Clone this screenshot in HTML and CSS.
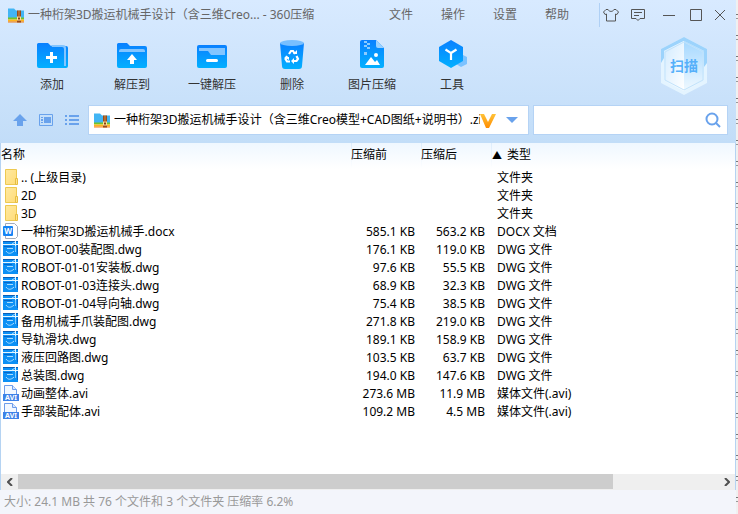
FILE: index.html
```html
<!DOCTYPE html>
<html lang="zh-CN">
<head>
  <meta charset="UTF-8" />
  <meta name="viewport" content="width=device-width, initial-scale=1.0"/>
  <title>360压缩</title>
  <link rel="stylesheet" href="styles.css">
</head>
<body>

<!-- Shared icons -->
<svg class="defs" aria-hidden="true">
  <defs>
    <linearGradient id="blue" x1="0" y1="0" x2="0" y2="1">
      <stop offset="0" stop-color="#0a80ff"/><stop offset="1" stop-color="#02b0ff"/>
    </linearGradient>
    <linearGradient id="gold" x1="0" y1="0" x2="1" y2="1">
      <stop offset="0" stop-color="#ffe9a0"/><stop offset="1" stop-color="#ffdc78"/>
    </linearGradient>
    <linearGradient id="orange" x1="0" y1="0" x2="0" y2="1">
      <stop offset="0" stop-color="#ffc338"/><stop offset="1" stop-color="#ff8c00"/>
    </linearGradient>
    <linearGradient id="shieldLeft" x1="0" y1="0" x2="1" y2="1">
      <stop offset="0" stop-color="#d2ebff"/><stop offset="1" stop-color="#ffffff"/>
    </linearGradient>
    <linearGradient id="shieldRight" x1="0" y1="0" x2="0" y2="1">
      <stop offset="0" stop-color="#a5d8ff"/><stop offset="1" stop-color="#f0f9ff"/>
    </linearGradient>
    <symbol id="archive" viewBox="0 0 16 15">
      <path d="M0 1h6l2 2h8v8H0z" fill="#42b5f4"/>
      <path d="M0 10h16v2H0z" fill="#72c52b"/>
      <path d="M0 12h16v2H0z" fill="#ffb51b"/>
      <path d="M0 14h16v1H0z" fill="#f07b16"/>
      <path d="M9 3h4v12H9z" fill="#9a4b18"/>
      <path d="M11 3v6" stroke="#ffd47c" stroke-dasharray="1 1"/>
      <path d="M9 9h4v4H9z" fill="#ffe39a"/>
      <path d="M10 10h2v2h-2z" fill="#8a3e10"/>
    </symbol>
    <symbol id="folder" viewBox="0 0 16 16">
      <path d="M2.500.5h11v15h-11z" fill="url(#gold)" stroke="#edc951"/>
      <path d="M12.500 9.500h2v6h-2z" fill="#ffe38b" stroke="#e6bd42"/>
    </symbol>
    <symbol id="docx" viewBox="0 0 16 16">
      <path d="M2.500.5h9l3 3v10l-2 2h-10z" fill="#fff" stroke="#a3abba"/>
      <rect y="3" width="10" height="10" rx="1" fill="#1684f5"/>
      <text x="5" y="11" font-size="8" font-weight="bold" text-anchor="middle" fill="#fff">W</text>
    </symbol>
    <symbol id="dwg" viewBox="0 0 16 16">
      <path d="M0 0h15v15H0z" fill="#0c90f5"/>
      <path d="M0 .5h15" stroke="#0a5fb8"/>
      <path d="M0 3.500h15M12.500 0v5" stroke="#e4f6ff"/>
      <path d="M12.500 5v6" stroke="#7fcaff"/>
      <path d="M4 7.500h6M3 10c2 3 5 3 8 0M9 3l3-2" fill="none" stroke="#a9dcff"/>
      <path d="M1 5.500h8M14.500 4v9" stroke="#0666c9"/>
    </symbol>
    <symbol id="avi" viewBox="0 0 16 16">
      <path d="M1.500 10V.5h8l4 4V10" fill="#f3f8ff" stroke="#6c9deb"/>
      <path d="M9.500.5v4h4" fill="#d9e8ff" stroke="#6c9deb"/>
      <path d="M0 9h16v7H0z" fill="#3d82e8"/>
      <text x="8" y="15" font-size="7" font-weight="bold" text-anchor="middle" fill="#fff">AVI</text>
    </symbol>
  </defs>
</svg>

<main class="window">
  <header class="titlebar">
    <svg class="icon"><use href="#archive"/></svg>
    <h1>一种桁架3D搬运机械手设计（含三维Creo... - 360压缩</h1>
    <nav class="menu">
      <button>文件</button>
      <button>操作</button>
      <button>设置</button>
      <button>帮助</button>
    </nav>
    <div class="window-buttons">
      <button aria-label="皮肤"><svg width="16" height="14" viewBox="0 0 16 14"><path d="M5 1.500H3L.5 4 2 6.500l1.500-.5v7h9V6l1.500.5L15.500 4 13 1.500h-2C10 4 6 4 5 1.500z"/></svg></button>
      <button aria-label="反馈"><svg width="14" height="12" viewBox="0 0 14 12"><path d="M.5.5h13v9H9l-2 2-2-2H.5zM3 3.500h8M3 6.500h5"/></svg></button>
      <button aria-label="最小化"><svg width="12" height="12" viewBox="0 0 12 12"><path d="M0 6.500h12"/></svg></button>
      <button aria-label="最大化"><svg width="12" height="12" viewBox="0 0 12 12"><path d="M.5.5h11v11H.5z"/></svg></button>
      <button aria-label="关闭"><svg width="12" height="12" viewBox="0 0 12 12"><path d="M1 1l10 10M11 1L1 11"/></svg></button>
    </div>
  </header>

  <section class="toolbar">
    <button>
      <svg viewBox="0 0 32 32"><path d="M1 4.500Q1 3 2.500 3H12l3 3h15q2 0 2 2v18q0 2-2 2H3q-2 0-2-2z" fill="url(#blue)"/><path d="M15 5h12q3 0 3 3v18h-2V9q0-2-2-2H16z" fill="#83c5ff"/><path d="M15.500 12v11M10 17.500h11" stroke="#fff" stroke-width="3"/></svg>
      添加
    </button>
    <button>
      <svg viewBox="0 0 32 32"><path d="M1 4.500Q1 3 2.500 3H11l3 3h15q2 0 2 2v18q0 2-2 2H3q-2 0-2-2z" fill="url(#blue)"/><path d="M3 12v-1q0-2 2-2h22q2 0 2 2v1z" fill="#83c5ff"/><path d="M16 14l5 6h-3v4h-4v-4h-3z" fill="#fff"/></svg>
      解压到
    </button>
    <button>
      <svg viewBox="0 0 32 32"><rect x="1" y="5" width="30" height="23" rx="2" fill="url(#blue)"/><path d="M3 8h26v7H15l-3-4H3z" fill="#83c5ff"/><path d="M11.500 20.500h9" stroke="#fff" stroke-width="3" stroke-linecap="round"/></svg>
      一键解压
    </button>
    <button>
      <svg viewBox="0 0 32 32"><path d="M4 3l2 23q0 3 3 3h14q3 0 3-3l2-23z" fill="url(#blue)"/><ellipse cx="16" cy="3" rx="12" ry="3" fill="#78bfff"/><g fill="none" stroke="#fff" stroke-width="2.200"><path d="M13 14l2-3h2l2 3M20.500 16l1.500 3-1.500 2H17M14 21.500h-3l-1.500-2.500 1.500-3"/></g><path d="M17 14h4v-4zM18 18v6l-3-3zM8 17h5v3z" fill="#fff"/></svg>
      删除
    </button>
    <button>
      <svg viewBox="0 0 32 32"><path d="M4 2q0-2 2-2h14l8 8v18q0 2-2 2H6q-2 0-2-2z" fill="url(#blue)"/><path d="M20 0l8 8h-6q-2 0-2-2z" fill="#9bd1ff"/><path d="M8 1h3v2H8zM11 3h3v2h-3zM8 5h3v2H8zM11 7h3v2h-3zM8 12h3v3H8z" fill="#8ccbff"/><circle cx="20" cy="15" r="2" fill="#fff"/><path d="M9 25l6-8 4 5 2-2 3 5z" fill="#fff"/></svg>
      图片压缩
    </button>
    <button>
      <svg viewBox="0 0 32 32"><path d="M25 14l6 3v7l-6 3-5-3v-7z" fill="#7bc2ff"/><path d="M15 0l12 7v14l-12 7-12-7V7z" fill="url(#blue)"/><path d="M9.500 9.500L15 13v7M15 13l5.500-3.500" fill="none" stroke="#fff" stroke-width="2.200"/></svg>
      工具
    </button>
    <button class="scan">
      <svg viewBox="0 0 48 60"><path d="M24 1l23 12v34L24 59 1 47V13z" fill="#e4f4ff"/><path d="M24 1l23 12v14l-3 4V15L24 5 4 15v7L1 27V13z" fill="#9cd3fc"/><path d="M24 5v50L4 45V15z" fill="url(#shieldLeft)"/><path d="M24 5l20 10v30L24 55z" fill="url(#shieldRight)"/><path d="M24 6l19 10v28L24 54 5 44V16z" fill="none" stroke="#c2e3fb"/></svg>
      <span>扫描</span>
    </button>
  </section>

  <section class="addressbar">
    <button aria-label="向上"><svg width="14" height="12" viewBox="0 0 14 12"><path d="M7 0l7 7h-4v5H4V7H0z" fill="#69a2ec"/></svg></button>
    <button aria-label="预览"><svg width="14" height="12" viewBox="0 0 14 12"><path d="M.5.5h13v11H.5z" fill="none" stroke="#69a2ec"/><path d="M5 3h7v6H5zM2 3h2v1H2zM2 5h2v2H2zM2 8h2v1H2z" fill="#69a2ec"/></svg></button>
    <button aria-label="列表"><svg width="14" height="12" viewBox="0 0 14 12"><path d="M0 1h2v2H0zM4 1h10v2H4zM0 5h2v2H0zM4 5h10v2H4zM0 9h2v2H0zM4 9h10v2H4z" fill="#69a2ec"/></svg></button>
    <div class="field path">
      <svg class="icon"><use href="#archive"/></svg>
      <input type="text" aria-label="路径" value="一种桁架3D搬运机械手设计（含三维Creo模型+CAD图纸+说明书）.zip">
      <svg width="16" height="15" viewBox="0 0 16 15"><path d="M0 1h4l4 8 4-8h4L9 15H6z" fill="url(#orange)"/></svg>
      <button aria-label="历史路径"><svg width="12" height="6" viewBox="0 0 12 6"><path d="M0 0h12L6 6z" fill="#69a2ec"/></svg></button>
    </div>
    <div class="field search">
      <input type="text" aria-label="搜索">
      <button aria-label="搜索"><svg width="16" height="16" viewBox="0 0 16 16"><circle cx="7" cy="7" r="5.500" fill="none" stroke="#69a2ec" stroke-width="2"/><path d="M11 11l4 4" stroke="#69a2ec" stroke-width="2"/></svg></button>
    </div>
  </section>

  <section class="files">
    <table>
      <colgroup><col class="col-name"><col class="col-size"><col class="col-size"><col></colgroup>
      <thead>
        <tr><th>名称</th><th>压缩前</th><th>压缩后</th><th><span class="sort">▲</span>类型</th></tr>
      </thead>
      <tbody>
        <tr><td><svg class="icon"><use href="#folder"/></svg>.. (上级目录)</td><td></td><td></td><td>文件夹</td></tr>
        <tr><td><svg class="icon"><use href="#folder"/></svg>2D</td><td></td><td></td><td>文件夹</td></tr>
        <tr><td><svg class="icon"><use href="#folder"/></svg>3D</td><td></td><td></td><td>文件夹</td></tr>
        <tr><td><svg class="icon"><use href="#docx"/></svg>一种桁架3D搬运机械手.docx</td><td>585.1 KB</td><td>563.2 KB</td><td>DOCX 文档</td></tr>
        <tr><td><svg class="icon"><use href="#dwg"/></svg>ROBOT-00装配图.dwg</td><td>176.1 KB</td><td>119.0 KB</td><td>DWG 文件</td></tr>
        <tr><td><svg class="icon"><use href="#dwg"/></svg>ROBOT-01-01安装板.dwg</td><td>97.6 KB</td><td>55.5 KB</td><td>DWG 文件</td></tr>
        <tr><td><svg class="icon"><use href="#dwg"/></svg>ROBOT-01-03连接头.dwg</td><td>68.9 KB</td><td>32.3 KB</td><td>DWG 文件</td></tr>
        <tr><td><svg class="icon"><use href="#dwg"/></svg>ROBOT-01-04导向轴.dwg</td><td>75.4 KB</td><td>38.5 KB</td><td>DWG 文件</td></tr>
        <tr><td><svg class="icon"><use href="#dwg"/></svg>备用机械手爪装配图.dwg</td><td>271.8 KB</td><td>219.0 KB</td><td>DWG 文件</td></tr>
        <tr><td><svg class="icon"><use href="#dwg"/></svg>导轨滑块.dwg</td><td>189.1 KB</td><td>158.9 KB</td><td>DWG 文件</td></tr>
        <tr><td><svg class="icon"><use href="#dwg"/></svg>液压回路图.dwg</td><td>103.5 KB</td><td>63.7 KB</td><td>DWG 文件</td></tr>
        <tr><td><svg class="icon"><use href="#dwg"/></svg>总装图.dwg</td><td>194.0 KB</td><td>147.6 KB</td><td>DWG 文件</td></tr>
        <tr><td><svg class="icon"><use href="#avi"/></svg>动画整体.avi</td><td>273.6 MB</td><td>11.9 MB</td><td>媒体文件(.avi)</td></tr>
        <tr><td><svg class="icon"><use href="#avi"/></svg>手部装配体.avi</td><td>109.2 MB</td><td>4.5 MB</td><td>媒体文件(.avi)</td></tr>
      </tbody>
    </table>
  </section>

  <div class="scrollbar">
    <button aria-label="向左滚动"><svg width="6" height="8" viewBox="0 0 6 8"><path d="M5 0L1 4l4 4"/></svg></button>
    <div class="track"><div class="thumb"></div></div>
    <button aria-label="向右滚动"><svg width="6" height="8" viewBox="0 0 6 8"><path d="M1 0l4 4-4 4"/></svg></button>
  </div>

  <footer class="status">大小: 24.1 MB 共 76 个文件和 3 个文件夹 压缩率 6.2%</footer>
</main>

<!-- Sliver of the window behind -->
<div class="behind"></div>

</body>
</html>
```

FILE: styles.css
```css
* {
  box-sizing: border-box;
}

body {
  margin: 0;
  display: flex;
  min-height: 100vh;
  font: 12px/18px "Noto Sans", "Noto Sans CJK SC", sans-serif;
  color: #000;
}

button, input {
  border: 0;
  padding: 0;
  background: none;
  font: inherit;
  color: inherit;
}

svg {
  flex: none;
}

.defs {
  position: absolute;
  width: 0;
  height: 0;
}

.icon {
  width: 16px;
  height: 16px;
}

.window {
  flex: 1;
  min-width: 0;
  display: flex;
  flex-direction: column;
  background: linear-gradient(#d8eaff, #c2ddf8 143px);
}

.behind {
  width: 2px;
  background: repeating-linear-gradient(#f0f0f0 0 14px, #777 14px 15px, #f0f0f0 15px 18px, #999 18px 19px, #f0f0f0 19px 21px);
}

/* Title bar */
.titlebar {
  display: flex;
  align-items: center;
  height: 30px;
  padding: 0 4px 0 8px;
  color: #666;
}

.titlebar h1 {
  flex: 1;
  margin: 0 0 0 4px;
  font-size: 12px;
  font-weight: normal;
  white-space: nowrap;
}

.menu {
  display: flex;
  margin-right: 16px;
}

.menu button {
  width: 52px;
  height: 28px;
}

.window-buttons {
  display: flex;
  height: 24px;
  border-left: 1px solid #afd0f5;
}

.window-buttons button {
  display: grid;
  place-items: center;
  width: 24px;
}

.window-buttons button:nth-child(2) {
  width: 32px;
}

.window-buttons button:nth-child(3) {
  width: 30px;
}

.window-buttons button:first-child {
  width: 22px;
}

.window-buttons svg {
  fill: none;
  stroke: #555;
}

/* Toolbar */
.toolbar {
  display: flex;
  height: 73px;
  padding: 10px 24px 0 12px;
  color: #333;
}

.toolbar button {
  display: flex;
  flex-direction: column;
  align-items: center;
  gap: 4px;
  width: 80px;
  height: 56px;
}

.toolbar svg {
  width: 32px;
  height: 32px;
}

.toolbar .scan {
  display: grid;
  place-items: center;
  width: 56px;
  height: 60px;
  margin: -4px 0 0 auto;
}

.scan svg, .scan span {
  grid-area: 1 / 1;
}

.toolbar .scan svg {
  width: 48px;
  height: 60px;
}

.scan span {
  font-size: 14px;
  font-weight: bold;
  color: #55b0fa;
}

/* Address bar */
.addressbar {
  display: flex;
  align-items: center;
  height: 40px;
  padding: 0 9px 6px 7px;
}

.addressbar > button {
  display: grid;
  place-items: center;
  width: 26px;
  height: 28px;
}

.field {
  display: flex;
  align-items: center;
  min-width: 0;
  height: 28px;
  background: #fff;
  box-shadow: 0 0 0 1px #b5d3f5;
}

.field input {
  flex: 1;
  min-width: 0;
  outline: none;
}

.field button {
  display: grid;
  place-items: center;
  width: 28px;
  height: 28px;
}

.path {
  flex: 9;
  margin: 0 6px 0 4px;
  padding-left: 5px;
}

.path input {
  margin-left: 4px;
}

.path button {
  width: 32px;
}

.search {
  flex: 4;
}

/* File list */
.files {
  flex: 1;
  overflow: hidden;
  border: solid #b5d3f2;
  border-width: 0 1px;
  background: #fff;
}

table {
  width: 100%;
  table-layout: fixed;
  border-collapse: collapse;
}

.col-name {
  width: 350px;
}

.col-size {
  width: 70px;
}

th {
  height: 26px;
  padding: 0 0 2px;
  text-align: left;
  font-weight: normal;
  background: linear-gradient(#eff7ff, #fff);
}

th + th {
  background: linear-gradient(#dcecfc, #fff) 0 0 / 1px 100% no-repeat, linear-gradient(#eff7ff, #fff);
}

.sort {
  margin: 0 5px 0 1px;
  font-size: 10px;
}

td {
  height: 18px;
  padding: 0;
  white-space: nowrap;
}

td:nth-child(2), td:nth-child(3) {
  padding-right: 6px;
  text-align: right;
}

td:last-child {
  padding-left: 6px;
}

td .icon {
  margin: 0 2px;
  vertical-align: top;
}

/* Horizontal scroll bar */
.scrollbar {
  display: flex;
  height: 16px;
  border: solid #b5d3f2;
  border-width: 0 1px;
  background: #efefef;
}

.scrollbar button {
  display: grid;
  place-items: center;
  width: 17px;
}

.scrollbar svg {
  fill: none;
  stroke: #505050;
  stroke-width: 2;
}

.track {
  flex: 1;
}

.thumb {
  width: 85%;
  height: 15px;
  background: #cdcdcd;
}

.status {
  height: 24px;
  padding: 3px 4px;
  background: #f3f5fb;
  color: #999;
}
```
